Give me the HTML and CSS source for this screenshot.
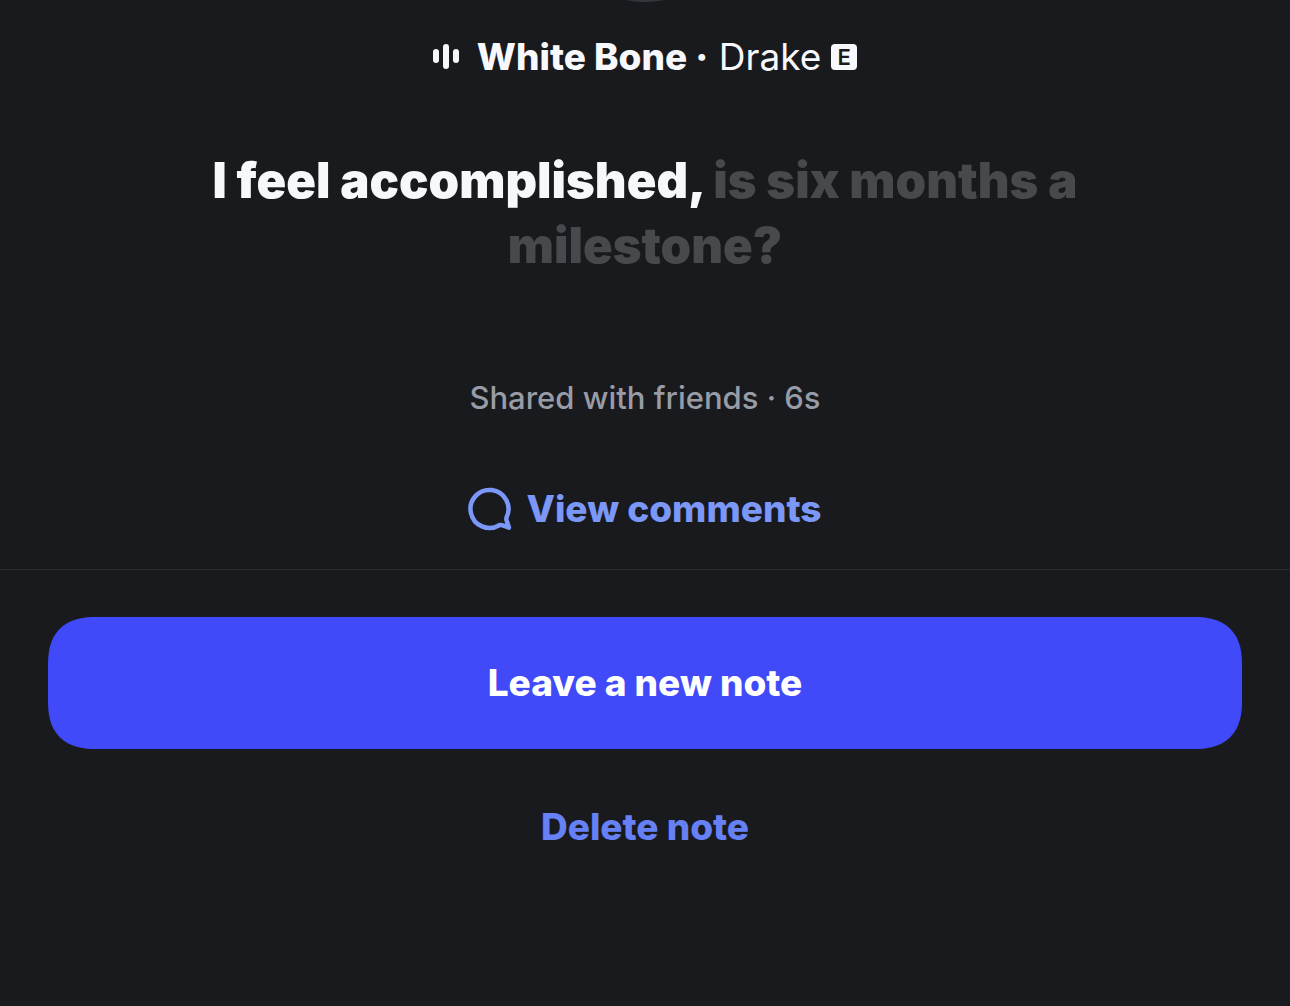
FILE: index.html
```html
<!DOCTYPE html>
<html lang="en">
<head>
    <meta charset="UTF-8">
    <meta name="viewport" content="width=device-width, initial-scale=1.0">
    <title>Note</title>
    <link rel="stylesheet" href="styles.css">
</head>
<body>
    <div class="avatar-edge"><div class="avatar"></div></div>

    <main class="note">
        <!-- Now playing -->
        <div class="song">
            <svg class="song-bars" viewBox="0 0 26 26" aria-hidden="true">
                <rect x="0" y="5" width="6" height="14" rx="3"/>
                <rect x="10" y="0" width="6" height="25" rx="3"/>
                <rect x="20" y="5" width="6" height="14" rx="3"/>
            </svg>
            <span><strong>White Bone ·</strong> Drake</span>
            <span class="explicit">E</span>
        </div>

        <h1 class="lyrics">I feel accomplished, <span class="upcoming">is six months a milestone?</span></h1>

        <p class="shared">Shared with friends · 6s</p>

        <a class="comments" href="#comments">
            <svg class="comments-icon" viewBox="0 0 44 44" aria-hidden="true">
                <path d="M38.6 30.2A19 19 0 1 0 31.3 38.2Q32.5 37.7 34 38.2L41 40.6L38.8 34Q38 32 38.6 30.2Z"/>
            </svg>
            View comments
        </a>
    </main>

    <!-- Actions -->
    <div class="actions">
        <button class="leave" type="button">Leave a new note</button>
        <button class="delete" type="button">Delete note</button>
    </div>
</body>
</html>
```
FILE: styles.css
```css
body {
    margin: 0;
    background: #191a1e;
    color: #f7f8fc;
    font-family: Inter, "Liberation Sans", sans-serif;
    font-size: 37px;
    line-height: 44px;
}

.avatar-edge {
    position: relative;
    height: 2px;
    overflow: hidden;
}

.avatar {
    position: absolute;
    bottom: 0;
    left: 50%;
    width: 200px;
    height: 200px;
    margin-left: -100px;
    border-radius: 50%;
    background: #34363a;
}

.note {
    display: flex;
    flex-direction: column;
    align-items: center;
    padding: 33px 48px 38px;
    border-bottom: 1px solid #2a2b2f;
}

.song {
    display: flex;
    align-items: center;
}

.song-bars {
    width: 26px;
    height: 26px;
    margin-right: 18px;
    fill: currentColor;
}

.song strong {
    font-weight: 800;
}

.explicit {
    width: 26px;
    height: 26px;
    margin-left: 10px;
    border-radius: 4px;
    background: #f7f8fc;
    color: #191a1e;
    font-size: 22px;
    font-weight: 600;
    line-height: 26px;
    text-align: center;
}

.lyrics {
    max-width: 900px;
    margin: 69px 0 98px;
    font-size: 49px;
    font-weight: 900;
    line-height: 65px;
    text-align: center;
}

.upcoming {
    color: #47494c;
}

.shared {
    margin: 0 0 67px;
    color: #989ca6;
    font-size: 31px;
    font-weight: 500;
}

.comments {
    display: flex;
    align-items: center;
    gap: 14px;
    color: #7b97f7;
    font-weight: 800;
    text-decoration: none;
}

.comments-icon {
    width: 44px;
    height: 44px;
    fill: none;
    stroke: currentColor;
    stroke-width: 4.5;
    stroke-linejoin: round;
}

.actions {
    display: flex;
    flex-direction: column;
    gap: 46px;
    padding: 47px 48px;
}

button {
    border: none;
    font: inherit;
    font-weight: 800;
    cursor: pointer;
}

.leave {
    padding: 44px;
    border-radius: 40px;
    background: #404af8;
    color: #fff;
}

.delete {
    align-self: center;
    padding: 10px 24px;
    background: none;
    color: #6680f5;
}

@supports (corner-shape: squircle) {
    .leave {
        border-radius: 48px;
        corner-shape: superellipse(1.3);
    }
}
```
